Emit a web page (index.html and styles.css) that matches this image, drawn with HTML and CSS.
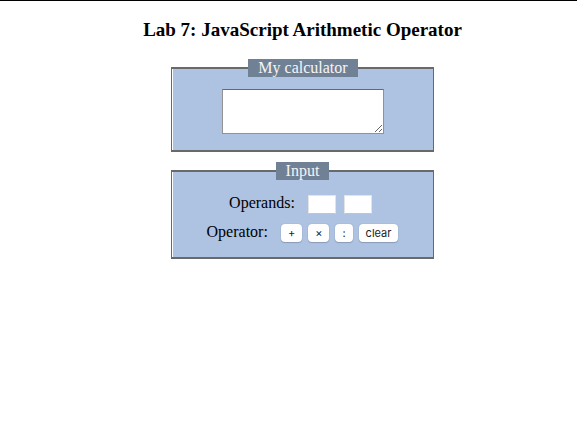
FILE: index.html
```html
<!DOCTYPE html>
<html lang="en">
<head>
  <meta charset="utf-8">
  <title>Lab 7: JavaScript Arithmetic Operator</title>
  <link rel="stylesheet" href="styles.css">
</head>
<body>
  <main class="page">
    <h1 class="title">Lab 7: JavaScript Arithmetic Operator</h1>
    <form class="calculator">
      <fieldset class="panel">
        <legend class="panel-title">My calculator</legend>
        <textarea class="display" aria-label="Result"></textarea>
      </fieldset>
      <fieldset class="panel panel-input">
        <legend class="panel-title">Input</legend>
        <div class="row">
          <label class="row-label" for="first">Operands:</label>
          <div class="operands">
            <input class="operand" id="first" type="text">
            <input class="operand" type="text" aria-label="Second operand">
          </div>
        </div>
        <div class="row" role="group" aria-labelledby="operator-label">
          <span class="row-label" id="operator-label">Operator:</span>
          <div class="operators">
            <button class="key" type="button">+</button>
            <button class="key" type="button">×</button>
            <button class="key" type="button">:</button>
            <button class="key" type="reset">clear</button>
          </div>
        </div>
      </fieldset>
    </form>
  </main>
</body>
</html>
```
FILE: styles.css
```css
* {
  box-sizing: border-box;
}

body {
  margin: 0;
  border-top: 1px solid #000;
  background: #fff;
  color: #000;
  font: 16px/18px "Liberation Serif", "Times New Roman", serif;
}

.page {
  display: flex;
  flex-direction: column;
  align-items: center;
  padding: 18px 0 0 28px;
}

.title {
  margin: 0 0 18px;
  font-size: 19px;
  line-height: 22px;
}

.calculator {
  display: grid;
  gap: 10px;
  width: 48%;
  min-width: 263px;
}

.panel {
  min-width: 0;
  margin: 0;
  padding: 12px 0 16px 1px;
  border: solid #696969;
  border-width: 2px 1px;
  background: #aec2e1;
  box-shadow: inset 1px 0 #fff;
  text-align: center;
}

.panel-input {
  padding: 15px 0;
}

.panel-title {
  margin: 0 auto;
  padding: 0 10px;
  background: #708195;
  color: #f5f5f5;
}

.display {
  display: block;
  width: 162px;
  height: 45px;
  margin: 0 auto;
  border: 1px solid #929292;
  border-top-color: #696969;
  background: #fff;
  resize: both;
}

.row {
  display: flex;
  justify-content: center;
  align-items: flex-start;
  gap: 13px;
}

.row + .row {
  margin-top: 10px;
}

.row-label {
  line-height: 16px;
}

.operands {
  display: flex;
  gap: 8px;
  padding-right: 4px;
}

.operand {
  width: 28px;
  height: 19px;
  padding: 1px;
  border: 1px solid #e4e4e4;
  border-bottom-color: #c4c4c4;
  background: #fff;
}

.operators {
  display: flex;
  gap: 6px;
}

.key {
  height: 18px;
  padding: 0 7px;
  border: 0;
  border-radius: 4px;
  background: #fff;
  box-shadow: 0 0 1px #7f8fab, 0 1px 1px #8c9dba;
  color: #222;
  font: 11px/18px Inter, sans-serif;
}
```
